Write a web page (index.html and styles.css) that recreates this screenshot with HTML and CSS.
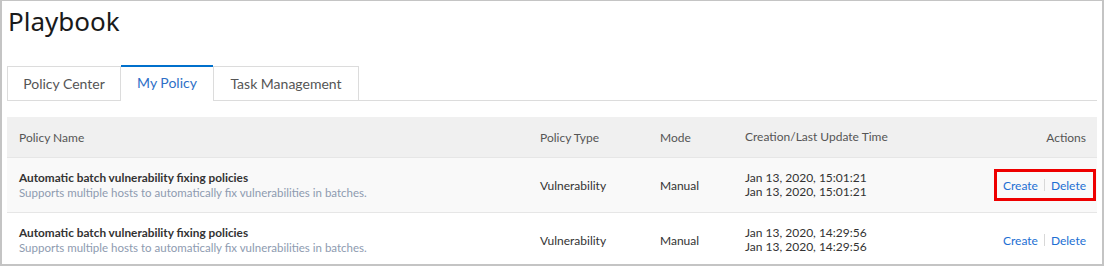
FILE: index.html
```html
<!DOCTYPE html>
<html>
<head>
<meta charset="utf-8">
<link rel="stylesheet" href="styles.css">
</head>
<body>
<div class="frame">
  <h1 class="title">Playbook</h1>
  <div class="tabs">
    <div class="tab">Policy Center</div>
    <div class="tab active">My Policy</div>
    <div class="tab">Task Management</div>
    <div class="tab-fill"></div>
  </div>
  <div class="table">
    <div class="row head">
      <div class="c c-name">Policy Name</div>
      <div class="c c-type">Policy Type</div>
      <div class="c c-mode">Mode</div>
      <div class="c c-time">Creation/Last Update Time</div>
      <div class="c c-act">Actions</div>
    </div>
    <div class="row body alt">
      <div class="c c-name">
        <div class="pname">Automatic batch vulnerability fixing policies</div>
        <div class="pdesc">Supports multiple hosts to automatically fix vulnerabilities in batches.</div>
      </div>
      <div class="c c-type">Vulnerability</div>
      <div class="c c-mode">Manual</div>
      <div class="c c-time"><div>Jan 13, 2020, 15:01:21</div><div>Jan 13, 2020, 15:01:21</div></div>
      <div class="c c-act">
        <div class="actions highlighted"><a class="link">Create</a><span class="sep"></span><a class="link">Delete</a></div>
      </div>
    </div>
    <div class="row body">
      <div class="c c-name">
        <div class="pname">Automatic batch vulnerability fixing policies</div>
        <div class="pdesc">Supports multiple hosts to automatically fix vulnerabilities in batches.</div>
      </div>
      <div class="c c-type">Vulnerability</div>
      <div class="c c-mode">Manual</div>
      <div class="c c-time"><div>Jan 13, 2020, 14:29:56</div><div>Jan 13, 2020, 14:29:56</div></div>
      <div class="c c-act">
        <div class="actions"><a class="link">Create</a><span class="sep"></span><a class="link">Delete</a></div>
      </div>
    </div>
  </div>
</div>
</body>
</html>
```

FILE: styles.css
```css
html, body {
  margin: 0;
  padding: 0;
  background: #ffffff;
}
body {
  font-family: "Lato", "Noto Sans", sans-serif;
  color: #333333;
}
.frame {
  width: 1104px;
  height: 266px;
  box-sizing: border-box;
  border: 2px solid #c4c4c4;
  border-top-width: 1px;
  padding: 0 5px 0 5px;
  overflow: hidden;
}
.title {
  margin: 0;
  padding: 3px 0 0 1px;
  font-family: "Noto Sans", sans-serif;
  font-size: 26px;
  font-weight: 400;
  line-height: 34px;
  color: #1a1a1a;
  height: 64px;
  box-sizing: border-box;
}
.tabs {
  display: flex;
  height: 36px;
  box-sizing: border-box;
  border-bottom: 1px solid #dcdcdc;
}
.tab {
  height: 35px;
  box-sizing: border-box;
  margin-top: 1px;
  border: 1px solid #dcdcdc;
  border-bottom: none;
  font-size: 14px;
  line-height: 33px;
  color: #555555;
  text-align: center;
}
.tab:nth-child(1) { width: 114px; }
.tab.active {
  width: 92px;
  margin-top: 0;
  height: 37px;
  margin-bottom: -1px;
  border: none;
  border-top: 2px solid #0070cc;
  background: #ffffff;
  color: #2e6fc7;
  line-height: 32px;
}
.tab:nth-child(3) { width: 146px; }
.tab-fill { flex: 1; }

.table {
  margin-top: 16px;
}
.row {
  display: flex;
  align-items: center;
  font-size: 12px;
}
.row.head {
  height: 40px;
  background: #f0f0f0;
  color: #555555;
}
.row.body {
  height: 55px;
  border-top: 1px solid #e6e6e6;
  box-sizing: border-box;
  color: #333333;
}
.row.alt { background: #f9f9f9; }
.c { box-sizing: border-box; }
.c-name { width: 521px; padding-left: 12px; }
.c-type { width: 120px; padding-left: 12px; }
.c-mode { width: 85px; padding-left: 12px; }
.c-time { width: 200px; padding-left: 12px; line-height: 14px; }
.c-act { flex: 1; padding-right: 11px; display: flex; justify-content: flex-end; }
.pname {
  font-weight: 700;
  font-size: 11.8px;
  color: #333333;
  line-height: 15px;
}
.pdesc {
  color: #8e9bb0;
  font-size: 11.5px;
  line-height: 15px;
}
.actions {
  display: flex;
  align-items: center;
  position: relative;
}
.actions.highlighted::after {
  content: "";
  position: absolute;
  left: -9px;
  right: -10px;
  top: -9px;
  bottom: -8px;
  border: 3px solid #ee0000;
}
.link {
  color: #1d6fd3;
  cursor: pointer;
}
.sep {
  width: 1px;
  height: 12px;
  background: #d8d8d8;
  margin: 0 6px;
}
```
